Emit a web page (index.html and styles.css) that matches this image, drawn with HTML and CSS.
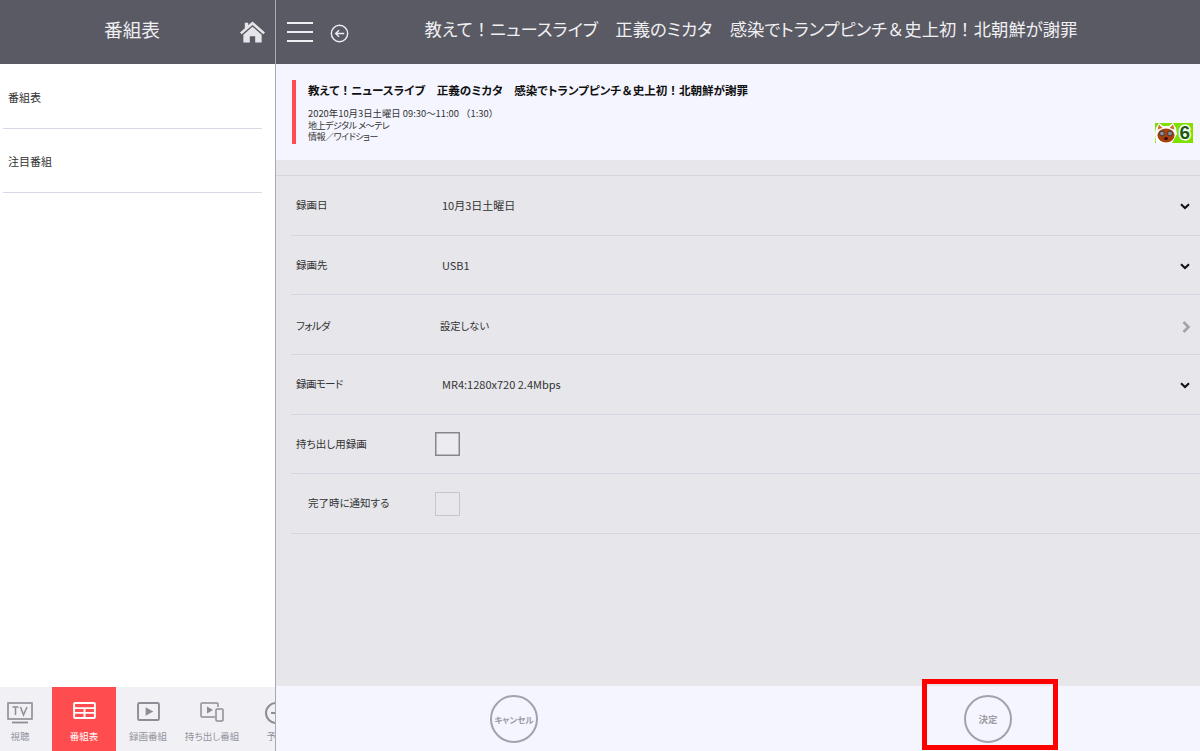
FILE: index.html
```html
<!DOCTYPE html>
<html lang="ja">
<head>
    <meta charset="UTF-8">
    <title>番組表</title>
    <link rel="stylesheet" href="styles.css">
</head>
<body>
    <!-- Sidebar -->
    <div class="sidebar">
        <div class="side-header">
            <h2>番組表</h2>
            <svg class="home-icon" viewBox="0 0 26 22" width="25" height="22">
                <path d="M13 0 L26 11.5 L24.2 13.4 L13 3.6 L1.8 13.4 L0 11.5 L5 7 V1.5 H8.5 V4 Z" fill="#e6e6ea"/>
                <path d="M13 5.6 L22.5 13.8 V22 H15.8 V15.5 H10.2 V22 H3.5 V13.8 Z" fill="#e6e6ea"/>
            </svg>
        </div>
        <div class="side-list">
            <a class="side-item">番組表</a>
            <a class="side-item">注目番組</a>
        </div>
        <div class="tabs">
            <div class="tab">
                <svg viewBox="0 0 26 24" width="26" height="24" fill="none" stroke="#8d8d96" stroke-width="1.6">
                    <rect x="1" y="1" width="24" height="16"/>
                    <path d="M5 20.5 H21" stroke-width="1.8"/>
                    <path d="M5.5 5 H11.5 M8.5 5 V13 M13.5 5 L16.5 13 L20 5" stroke-width="1.5"/>
                </svg>
                <span>視聴</span>
            </div>
            <div class="tab active">
                <svg viewBox="0 0 24 18" width="23" height="17">
                    <rect x="1" y="1" width="22" height="16" rx="1" fill="none" stroke="#fff" stroke-width="2"/>
                    <path d="M1 6.5 H23 M1 11.5 H23 M12 6 V17" stroke="#fff" stroke-width="2"/>
                </svg>
                <span>番組表</span>
            </div>
            <div class="tab">
                <svg viewBox="0 0 24 20" width="23" height="19">
                    <rect x="1" y="1" width="22" height="18" rx="1.5" fill="none" stroke="#8d8d96" stroke-width="2"/>
                    <path d="M9 5.5 L17 10 L9 14.5 Z" fill="#8d8d96"/>
                </svg>
                <span>録画番組</span>
            </div>
            <div class="tab">
                <svg viewBox="0 0 24 20" width="24" height="20">
                    <path d="M15 15 H2 Q1 15 1 14 V2 Q1 1 2 1 H17 Q18 1 18 2 V5" fill="none" stroke="#8d8d96" stroke-width="1.5"/>
                    <path d="M7 4.5 L13 8 L7 11.5 Z" fill="#8d8d96"/>
                    <rect x="16" y="7" width="7" height="12" rx="1" fill="none" stroke="#8d8d96" stroke-width="1.5"/>
                </svg>
                <span>持ち出し番組</span>
            </div>
            <div class="tab">
                <svg viewBox="0 0 24 24" width="24" height="24" fill="none" stroke="#8d8d96" stroke-width="2">
                    <circle cx="12" cy="11" r="10"/>
                    <path d="M7 11 H17"/>
                </svg>
                <span>予約</span>
            </div>
        </div>
    </div>

    <div class="main-content">
        <header>
            <button class="menu-btn"><i></i><i></i><i></i></button>
            <svg class="back-icon" viewBox="0 0 20 20" width="19" height="19" fill="none" stroke="#eeeef2" stroke-width="1.5">
                <circle cx="10" cy="10" r="8.6"/>
                <path d="M15 10 H6 M9.5 6.5 L6 10 L9.5 13.5"/>
            </svg>
            <h1>教えて<span class="wide">！</span>ニュースライブ　正義のミカタ　感染でトランプピンチ<span class="wide">＆</span>史上初<span class="wide">！</span>北朝鮮が謝罪</h1>
        </header>

        <section class="program">
            <div class="program-info">
                <h3>教えて<span class="wide">！</span>ニュースライブ　正義のミカタ　感染でトランプピンチ<span class="wide">＆</span>史上初<span class="wide">！</span>北朝鮮が謝罪</h3>
                <p>2020年10月3日土曜日 09:30～11:00 <span class="wide">（1:30）</span></p>
                <p class="tight">地上デジタル メ～テレ</p>
                <p class="tight">情報／ワイドショー</p>
            </div>
            <div class="badge">
                <svg viewBox="0 0 38 20" width="38" height="20">
                    <rect width="38" height="20" fill="#7fe000"/>
                    <path d="M1 5 L4 0 L8 3 H14 L18 0 L21 5 L22 11 L17 20 H1 L0 11 Z" fill="#fff"/>
                    <path d="M4 1.5 L7.5 5 L2.5 6.5 Z M18 1.5 L19.5 6.5 L14.5 5 Z" fill="#c8702c"/>
                    <ellipse cx="11" cy="12.5" rx="8.5" ry="7" fill="#a8400f"/>
                    <circle cx="7" cy="10.5" r="2.4" fill="#8e8e8e" stroke="#3a3a3a"/>
                    <circle cx="15" cy="10.5" r="2.4" fill="#8e8e8e" stroke="#3a3a3a"/>
                    <ellipse cx="11" cy="15.5" rx="2" ry="1.5" fill="#301008"/>
                </svg>
                <span>6</span>
            </div>
        </section>

        <div class="settings">
            <div class="row">
                <label>録画日</label>
                <span class="value">10月3日土曜日</span>
                <svg class="chevron" viewBox="0 0 10 7" width="10" height="7"><path d="M1 1.2 L5 5 L9 1.2" fill="none" stroke="#111" stroke-width="2"/></svg>
            </div>
            <div class="row">
                <label>録画先</label>
                <span class="value">USB1</span>
                <svg class="chevron" viewBox="0 0 10 7" width="10" height="7"><path d="M1 1.2 L5 5 L9 1.2" fill="none" stroke="#111" stroke-width="2"/></svg>
            </div>
            <div class="row">
                <label class="kana low">フォルダ</label>
                <span class="value folder">設定しない</span>
                <svg class="arrow" viewBox="0 0 9 12" width="9" height="12"><path d="M1.5 1 L6.5 6 L1.5 11" fill="none" stroke="#a2a2aa" stroke-width="2.6"/></svg>
            </div>
            <div class="row">
                <label class="kana">録画モード</label>
                <span class="value">MR4:1280x720 2.4Mbps</span>
                <svg class="chevron" viewBox="0 0 10 7" width="10" height="7"><path d="M1 1.2 L5 5 L9 1.2" fill="none" stroke="#111" stroke-width="2"/></svg>
            </div>
            <div class="row">
                <label>持ち出し用録画</label>
                <span class="check"></span>
            </div>
            <div class="row">
                <label class="sub">完了時に通知する</label>
                <span class="check disabled"></span>
            </div>
        </div>

        <footer>
            <button class="round-btn cancel">キャンセル</button>
            <button class="round-btn ok">決定</button>
            <div class="highlight"></div>
        </footer>
    </div>
</body>
</html>
```

FILE: styles.css
```css
/* General Styles */
* {
    box-sizing: border-box;
}

body {
    font-family: "Noto Sans CJK JP", "Noto Sans", sans-serif;
    font-feature-settings: "palt";
    background-color: #e6e6eb;
    margin: 0;
    display: flex;
    width: 1200px;
    height: 751px;
    overflow: hidden;
    color: #333;
}

/* full width punctuation stays full width */
.wide {
    font-feature-settings: normal;
}

/* Sidebar Styles */
.sidebar {
    width: 276px;
    height: 751px;
    flex-shrink: 0;
    display: flex;
    flex-direction: column;
    background-color: #fff;
    border-right: 1px solid #a9a9b0;
}

.side-header {
    height: 64px;
    background-color: #5a5a64;
    display: flex;
    align-items: center;
    padding-left: 104px;
    position: relative;
}

.side-header h2 {
    margin: 0 0 8px;
    font-size: 18.7px;
    font-weight: 400;
    color: #f0f0f2;
}

.home-icon {
    position: absolute;
    left: 240px;
    top: 21px;
}

.side-list {
    flex: 1;
    padding: 1px 13px 0 3px;
}

.side-item {
    display: flex;
    align-items: center;
    height: 64px;
    padding: 0 0 0 5px;
    font-size: 11px;
    border-bottom: 1px solid #d8d8e8;
}

/* Bottom tabs */
.tabs {
    height: 64px;
    display: flex;
    overflow: hidden;
    background-color: #f0f0f5;
}

.tab {
    flex: 0 0 64px;
    display: flex;
    flex-direction: column;
    align-items: center;
    padding: 15px 0 8px;
    font-size: 9.5px;
    white-space: nowrap;
    color: #94949c;
}

.tab span {
    margin-top: auto;
}

.tab:first-child {
    margin-left: -12px;
}

.tab.active {
    background-color: #ff4d4f;
    color: #fff;
}

/* Main Content Styles */
.main-content {
    flex: 1;
    display: flex;
    flex-direction: column;
    min-width: 0;
}

header {
    height: 64px;
    background-color: #5a5a64;
    display: flex;
    align-items: center;
    padding-left: 11px;
}

.menu-btn {
    width: 26px;
    height: 20px;
    padding: 0;
    border: none;
    background: none;
    display: flex;
    flex-direction: column;
    justify-content: space-between;
}

.menu-btn i {
    display: block;
    height: 2px;
    background-color: #eeeef2;
}

.back-icon {
    margin: 3px 0 0 17px;
}

header h1 {
    flex: 1;
    margin: 0 0 8px;
    padding-right: 47px;
    font-size: 17.35px;
    font-weight: 400;
    color: #f0f0f2;
    text-align: center;
    white-space: nowrap;
}

/* Program info */
.program {
    height: 96px;
    background-color: #f4f5fe;
    padding: 16px 7px 0 16px;
    position: relative;
}

.program-info {
    height: 64px;
    padding-left: 12px;
    border-left: 4px solid #ff4d4f;
}

.program-info h3 {
    margin: 0 0 8px;
    font-size: 11.55px;
    line-height: 20px;
    font-weight: 700;
    color: #111;
}

.program-info p {
    margin: 0;
    font-size: 9.4px;
    line-height: 11.7px;
    color: #333;
}

.program-info p.tight {
    font-size: 9px;
    letter-spacing: -0.45px;
}

.badge {
    position: absolute;
    left: 879px;
    top: 59px;
    width: 38px;
    height: 20px;
}

.badge svg {
    display: block;
}

.badge span {
    position: absolute;
    right: 3px;
    top: 0;
    font-family: "Liberation Sans", sans-serif;
    font-size: 19px;
    line-height: 20px;
    font-weight: 700;
    color: #1c5a10;
    -webkit-text-stroke: 3px #fff;
    paint-order: stroke fill;
}

/* Settings rows */
.settings {
    margin-top: 15px;
    border-top: 1px solid #d5d5de;
    padding-left: 15px;
}

.row {
    height: 59.7px;
    display: flex;
    align-items: center;
    position: relative;
    padding-left: 5px;
    font-size: 10.5px;
    border-bottom: 1px solid #d5d5e2;
}

.row label {
    width: 146px;
    flex-shrink: 0;
    margin-top: -2px;
}

.row label.kana {
    letter-spacing: -0.6px;
}

.row label.low {
    margin-top: 1px;
}

.row label.sub {
    padding-left: 12px;
}

.value {
    flex: 1;
    font-size: 11px;
}

.value.folder {
    margin: 2px 0 0 -2px;
    font-size: 10.3px;
}

.chevron {
    position: absolute;
    right: 10px;
    top: 27px;
}

.arrow {
    position: absolute;
    right: 9px;
    top: 26px;
}

.check {
    width: 25px;
    height: 24px;
    margin-left: -7px;
    background-color: #ececf0;
    border: 1px solid #85858c;
    box-shadow: inset 0 0 0 0.5px #85858c;
}

.check.disabled {
    background-color: #e8e8ec;
    border-color: #c6c6cb;
    box-shadow: none;
}

/* Footer */
footer {
    margin-top: auto;
    height: 65px;
    background-color: #f4f5fe;
    display: flex;
    align-items: flex-start;
    padding: 9px 0 0 214px;
    position: relative;
}

.round-btn {
    width: 48px;
    height: 48px;
    padding: 0;
    border: 2px solid #a2a2aa;
    border-radius: 50%;
    background-color: #f4f5fe;
    font-family: inherit;
    font-feature-settings: inherit;
    font-size: 8.5px;
    font-weight: 700;
    color: #9c9ca4;
}

.round-btn.ok {
    margin-left: 426px;
    font-size: 9.5px;
}

/* red frame over the decide button */
.highlight {
    position: absolute;
    left: 646px;
    top: -7px;
    width: 136px;
    height: 71px;
    border: 5px solid #ff0000;
    pointer-events: none;
}
```
